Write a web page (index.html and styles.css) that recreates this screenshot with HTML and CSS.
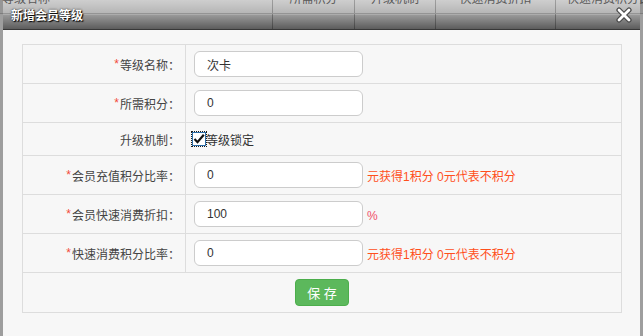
FILE: index.html
```html
<!DOCTYPE html>
<html lang="zh">
<head>
<meta charset="utf-8">
<title>新增会员等级</title>
<link rel="stylesheet" href="styles.css">
</head>
<body>
<div class="page">
  <div class="page-head">
    <div class="th c1">等级名称</div>
    <div class="th c2">所需积分</div>
    <div class="th c3">升级机制</div>
    <div class="th c4">快速消费折扣</div>
    <div class="th c5">快速消费积分比率</div>
  </div>
  <div class="page-body">
    <div class="td c1"></div>
    <div class="td c2"></div>
    <div class="td c3"></div>
    <div class="td c4"></div>
    <div class="td c5"></div>
  </div>
</div>

<div class="dialog">
  <div class="dialog-title">
    <span class="dialog-name">新增会员等级</span>
    <span class="close">
      <svg width="16" height="16" viewBox="0 0 16 16">
        <path d="M3 3 L13 13 M13 3 L3 13" stroke="#4a4a4a" stroke-width="5.2" stroke-linecap="round" fill="none"/>
        <path d="M3 3 L13 13 M13 3 L3 13" stroke="#ffffff" stroke-width="2.8" stroke-linecap="round" fill="none"/>
      </svg>
    </span>
  </div>
  <div class="dialog-body">
    <div class="form">
      <div class="row">
        <div class="lbl"><i>*</i>等级名称：</div>
        <div class="val"><input class="inp" type="text" value="次卡"></div>
      </div>
      <div class="row">
        <div class="lbl"><i>*</i>所需积分：</div>
        <div class="val"><input class="inp" type="text" value="0"></div>
      </div>
      <div class="row row-short">
        <div class="lbl">升级机制：</div>
        <div class="val">
          <span class="cb">
            <svg width="12" height="12" viewBox="0 0 12 12">
              <path d="M1.5 6 L4.5 9.2 L10.8 1.8" stroke="#111" stroke-width="2.2" fill="none"/>
            </svg>
          </span>
          <span class="cb-text">等级锁定</span>
        </div>
      </div>
      <div class="row">
        <div class="lbl"><i>*</i>会员充值积分比率：</div>
        <div class="val"><input class="inp" type="text" value="0"><span class="hint">元获得1积分 0元代表不积分</span></div>
      </div>
      <div class="row">
        <div class="lbl"><i>*</i>会员快速消费折扣：</div>
        <div class="val"><input class="inp" type="text" value="100"><span class="hint pct">%</span></div>
      </div>
      <div class="row">
        <div class="lbl"><i>*</i>快速消费积分比率：</div>
        <div class="val"><input class="inp" type="text" value="0"><span class="hint">元获得1积分 0元代表不积分</span></div>
      </div>
      <div class="row row-actions">
        <button class="btn-save" type="button">保 存</button>
      </div>
    </div>
  </div>
</div>
</body>
</html>
```

FILE: styles.css
```css
* {
  box-sizing: border-box;
}

html,
body {
  margin: 0;
  padding: 0;
}

body {
  width: 643px;
  height: 336px;
  position: relative;
  overflow: hidden;
  background: #ffffff;
  font-family: "Liberation Sans", "Noto Sans CJK SC", sans-serif;
  font-size: 12px;
}

/* underlying page (partly visible through the dialog title bar) */
.page {
  margin-top: -8px;
}

.page-head,
.page-body {
  display: flex;
}

.page-head {
  height: 22px;
  background: #f0f0f0;
  border-bottom: 1px solid #c4c4c4;
}

.page-body {
  height: 330px;
  background: #ffffff;
}

.th,
.td {
  border-right: 1px solid #b8b8b8;
  flex: none;
}

.th {
  color: #6a6a6a;
  line-height: 14px;
  text-align: center;
  white-space: nowrap;
  overflow: hidden;
}

.c1 { width: 273px; text-align: left; padding-left: 2px; }
.c2 { width: 82px; }
.c3 { width: 81px; }
.c4 { width: 120px; }
.c5 { width: 87px; text-align: left; padding-left: 11px; border-right: 0; }

/* dialog */
.dialog {
  position: absolute;
  top: 0;
  left: 0;
  width: 643px;
  height: 336px;
  display: flex;
  flex-direction: column;
  border-left: 3px solid rgba(40, 40, 40, 0.45);
  border-right: 3px solid rgba(40, 40, 40, 0.45);
}

.dialog-title {
  height: 30px;
  flex: none;
  display: flex;
  align-items: center;
  justify-content: space-between;
  padding: 0 8px 0 8px;
  border-bottom: 1px solid #383838;
  background: linear-gradient(to bottom,
    rgba(0, 0, 0, 0.14) 0,
    rgba(0, 0, 0, 0.25) 14px,
    rgba(0, 0, 0, 0.40) 15px,
    rgba(0, 0, 0, 0.64) 29px);
}

.dialog-name {
  color: #ffffff;
  font-weight: bold;
  font-size: 12px;
  text-shadow: 1px 1px 1px #000, 0 0 2px #222;
}

.close {
  display: flex;
  width: 16px;
  height: 16px;
}

.dialog-body {
  flex: 1;
  background: #f7f7f7;
  padding: 14px 0 0 19px;
}

.form {
  width: 600px;
  border: 1px solid #dddddd;
}

.row {
  display: flex;
  height: 39px;
  border-bottom: 1px solid #dddddd;
}

.row-short {
  height: 33px;
}

.row:last-child {
  border-bottom: 0;
}

.lbl {
  width: 163px;
  flex: none;
  display: flex;
  align-items: center;
  justify-content: flex-end;
  padding-right: 5px;
  border-right: 1px solid #dddddd;
  color: #444444;
  white-space: nowrap;
}

.lbl i {
  font-style: normal;
  color: #f24a3a;
  margin-right: 1px;
}

.val {
  flex: 1;
  display: flex;
  align-items: center;
  padding-left: 8px;
}

.inp {
  width: 169px;
  height: 26px;
  margin: 0;
  padding: 0 12px;
  border: 1px solid #cccccc;
  border-radius: 6px;
  background: #ffffff;
  color: #333333;
  font-family: "Liberation Sans", "Noto Sans CJK SC", sans-serif;
  font-size: 12px;
  outline: none;
}

.hint {
  margin-left: 4px;
  color: #ff4f1c;
  white-space: nowrap;
}

.pct {
  color: #f0506a;
  margin-top: 3px;
}

.cb {
  width: 14px;
  height: 14px;
  margin-left: -2px;
  display: flex;
  align-items: center;
  justify-content: center;
  border: 1px solid #2d6ea8;
  background: #ffffff;
  outline: 1px dotted #1a1a1a;
}

.cb-text {
  color: #333333;
}

.row-actions {
  justify-content: center;
  align-items: center;
}

.btn-save {
  width: 54px;
  height: 27px;
  margin: 0;
  padding: 0;
  border: 1px solid #4cae4c;
  border-radius: 4px;
  background: #5cb85c;
  color: #ffffff;
  font-family: "Liberation Sans", "Noto Sans CJK SC", sans-serif;
  font-size: 13px;
}
```
